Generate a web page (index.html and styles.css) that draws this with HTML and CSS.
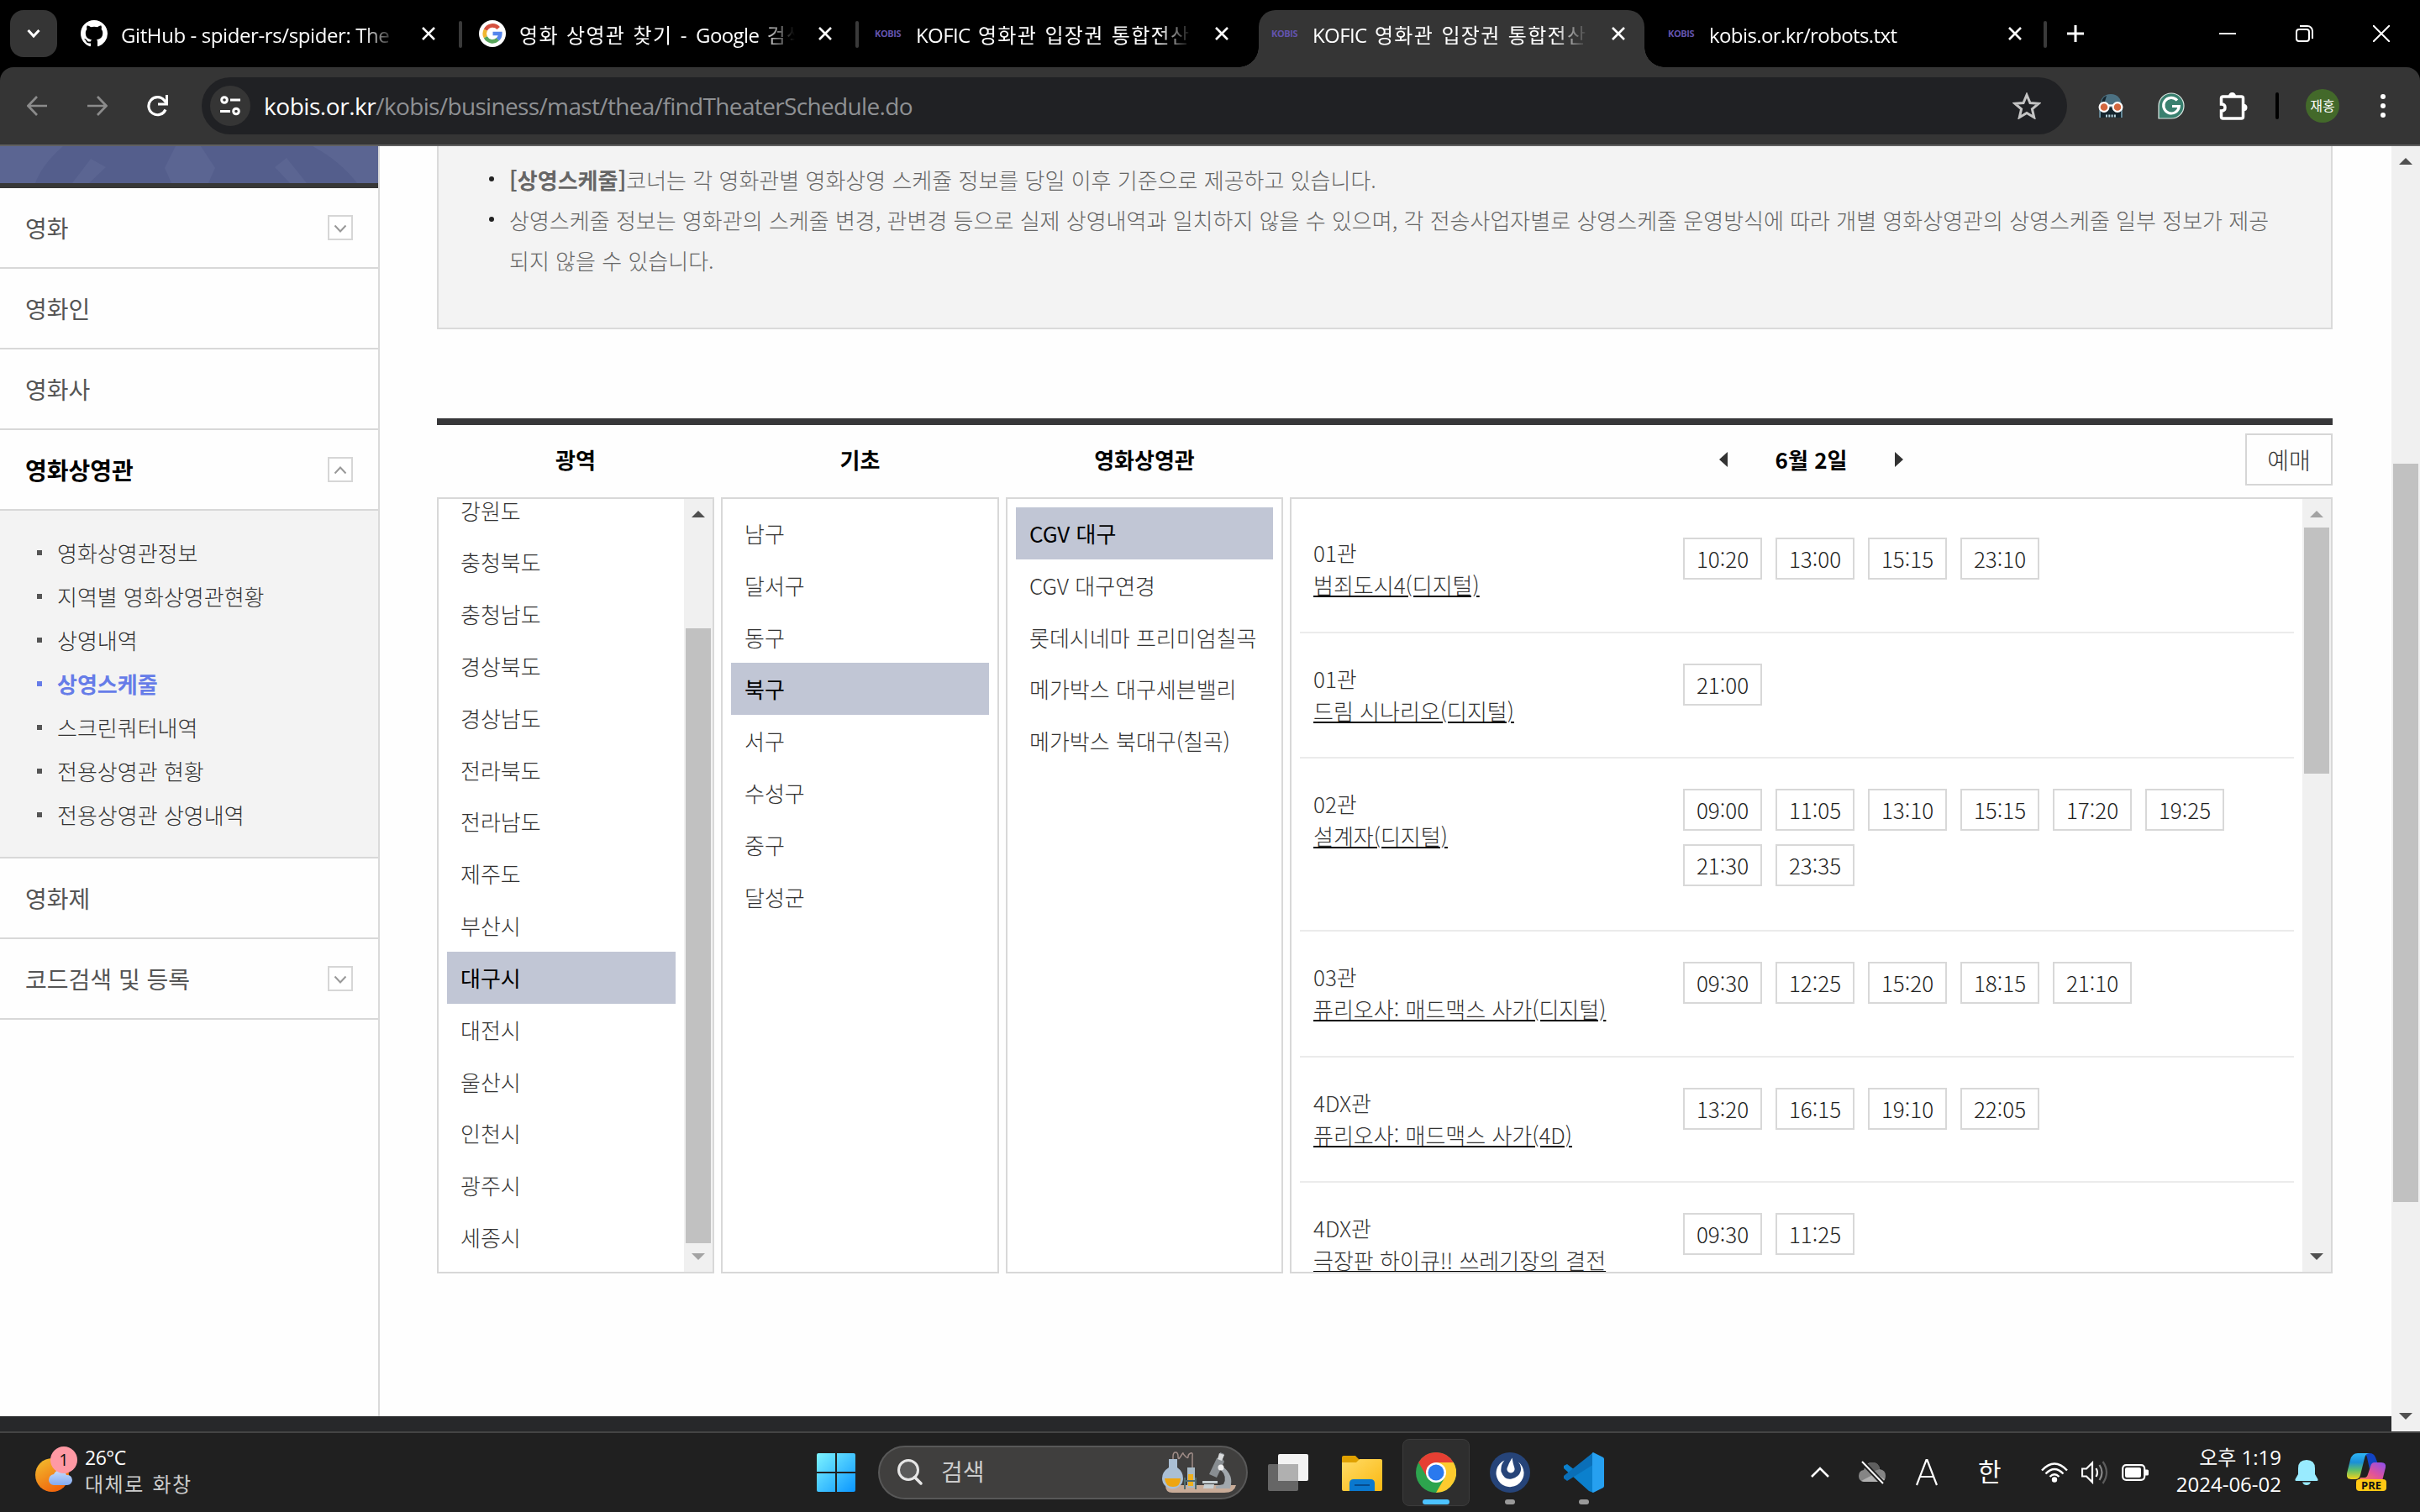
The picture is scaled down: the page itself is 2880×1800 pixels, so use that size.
FILE: index.html
```html
<!DOCTYPE html>
<html lang="ko">
<head>
<meta charset="utf-8">
<title>KOFIC 영화관 입장권 통합전산망</title>
<link rel="stylesheet" href="styles.css">
</head>
<body>
<svg class="defs" width="0" height="0">
  <defs>
    <symbol id="x" viewBox="0 0 16 16"><path d="M1 1l14 14M15 1L1 15" stroke="#fff" stroke-width="2.6" fill="none"/></symbol>
    <symbol id="down" viewBox="0 0 30 30"><rect x="1" y="1" width="28" height="28" fill="#fff" stroke="#d6d6d6" stroke-width="2"/><path d="M8.500 12.500l6.500 7 6.500-7" fill="none" stroke="#999" stroke-width="2"/></symbol>
    <symbol id="up" viewBox="0 0 30 30"><rect x="1" y="1" width="28" height="28" fill="#fff" stroke="#d6d6d6" stroke-width="2"/><path d="M8.500 19.500l6.500-7 6.500 7" fill="none" stroke="#999" stroke-width="2"/></symbol>
    <linearGradient id="win" x1="0" y1="0" x2="1" y2="1"><stop offset="0" stop-color="#7df4ff"/><stop offset="1" stop-color="#0a96ff"/></linearGradient>
    <linearGradient id="sun" x1="0" y1="0" x2=".6" y2="1"><stop offset="0" stop-color="#f2c230"/><stop offset="1" stop-color="#f0640c"/></linearGradient>
    <linearGradient id="cloud" x1="0" y1="0" x2="0" y2="1"><stop offset="0" stop-color="#c6dcfb"/><stop offset="1" stop-color="#84aaf0"/></linearGradient>
    <linearGradient id="folder" x1="0" y1="0" x2="1" y2="1"><stop offset="0" stop-color="#ffdc66"/><stop offset="1" stop-color="#fbb812"/></linearGradient>
    <linearGradient id="cpa" x1="0" y1="0" x2="0" y2="1"><stop offset="0" stop-color="#2fb6f6"/><stop offset=".35" stop-color="#1a8fd8"/><stop offset=".65" stop-color="#5fbf6a"/><stop offset="1" stop-color="#f5d31b"/></linearGradient>
    <linearGradient id="cpb" x1="1" y1="0" x2="0" y2="1"><stop offset="0" stop-color="#8a4ff0"/><stop offset=".5" stop-color="#e0529a"/><stop offset="1" stop-color="#ff8a3c"/></linearGradient>
  </defs>
</svg>

<header class="tabs">
  <div class="tab-search"><svg width="16" height="12" viewBox="0 0 16 12"><path d="M1.500 2l6.500 7 6.500-7" fill="none" stroke="#fff" stroke-width="3"/></svg></div>
  <div class="tab t1">
    <svg class="fav" viewBox="0 0 16 16"><path fill="#fff" d="M8 0C3.580 0 0 3.580 0 8c0 3.540 2.290 6.530 5.470 7.590.4.070.55-.17.55-.38 0-.19-.01-.82-.01-1.490-2.010.37-2.530-.49-2.690-.94-.09-.23-.48-.94-.82-1.130-.28-.15-.68-.52-.01-.53.63-.01 1.080.58 1.230.82.72 1.210 1.870.87 2.330.66.07-.52.28-.87.51-1.070-1.780-.2-3.640-.89-3.640-3.950 0-.87.31-1.590.82-2.150-.08-.2-.36-1.020.08-2.120 0 0 .67-.21 2.200.82a7.600 7.600 0 0 1 4 0c1.530-1.040 2.200-.82 2.200-.82.44 1.100.16 1.920.08 2.120.51.56.82 1.270.82 2.150 0 3.070-1.870 3.750-3.650 3.950.29.25.54.73.54 1.480 0 1.070-.01 1.930-.01 2.200 0 .21.15.46.55.38A8.010 8.010 0 0 0 16 8c0-4.420-3.580-8-8-8z"/></svg>
    <span class="title">GitHub - spider-rs/spider: The</span>
    <svg class="close"><use href="#x"/></svg>
  </div>
  <div class="tab t2">
    <svg class="fav" viewBox="0 0 32 32"><circle cx="16" cy="16" r="16" fill="#fff"/><g fill="none" stroke-width="4.600"><path d="M23.200 9.600A9.300 9.300 0 0 0 7.800 11.700" stroke="#d5503f"/><path d="M7.800 11.700a9.300 9.300 0 0 0 0 8.600" stroke="#f0b72f"/><path d="M7.800 20.300A9.300 9.300 0 0 0 22.400 22.800" stroke="#57a55a"/><path d="M22.400 22.800A9.300 9.300 0 0 0 25.300 16H16.500" stroke="#5585ec"/></g></svg>
    <span class="title ko">영화 상영관 찾기 - <i>Google</i> 검색</span>
    <svg class="close"><use href="#x"/></svg>
  </div>
  <div class="tab t3"><span class="kobis">KOBIS</span><span class="title ko"><i>KOFIC</i> 영화관 입장권 통합전산망</span><svg class="close"><use href="#x"/></svg></div>
  <div class="tab t4 active"><span class="kobis">KOBIS</span><span class="title ko"><i>KOFIC</i> 영화관 입장권 통합전산망</span><svg class="close"><use href="#x"/></svg></div>
  <div class="tab t5"><span class="kobis">KOBIS</span><span class="title narrow">kobis.or.kr/robots.txt</span><svg class="close"><use href="#x"/></svg></div>
  <svg class="plus" width="20" height="20"><path d="M10 0v20M0 10h20" stroke="#fff" stroke-width="3"/></svg>
  <div class="window-buttons">
    <svg width="20" height="20"><path d="M0 10h20" stroke="#fff" stroke-width="2"/></svg>
    <svg width="21" height="20" fill="none" stroke="#fff" stroke-width="2"><rect x="1" y="5" width="15" height="14" rx="3"/><path d="M5 1h9a6 6 0 0 1 6 6v9"/></svg>
    <svg width="20" height="20"><path d="M0 0l20 20M20 0L0 20" stroke="#fff" stroke-width="2"/></svg>
  </div>
</header>

<div class="toolbar">
  <svg class="nav" viewBox="0 0 24 24"><path d="M24 12H2M12 1L1.500 12 12 23" stroke="#8b8b8b" stroke-width="2.700" fill="none"/></svg>
  <svg class="nav second" viewBox="0 0 24 24"><path d="M0 12h22M12 1l10.500 11L12 23" stroke="#8b8b8b" stroke-width="2.700" fill="none"/></svg>
  <svg class="nav reload" viewBox="0 0 26 26"><path d="M23 17.500A10.500 10.500 0 1 1 21.500 6.500L23.500 9" stroke="#fff" stroke-width="3.200" fill="none"/><path d="M24.500 0v11H14" fill="none" stroke="#fff" stroke-width="3"/></svg>
  <div class="omnibox">
    <div class="site"><svg width="24" height="24" fill="none" stroke="#fff" stroke-width="3"><circle cx="5" cy="5" r="3.300"/><path d="M12 5h12M0 18.500h12"/><circle cx="19" cy="18.500" r="3.300"/></svg></div>
    <div class="url"><b>kobis.or.kr</b>/kobis/business/mast/thea/findTheaterSchedule.do</div>
    <svg width="34" height="32" viewBox="0 0 34 32"><path d="M17 3l4 9.500 10 .8-7.600 6.600 2.300 9.800L17 24.500l-8.700 5.200 2.300-9.800L3 13.300l10-.8z" fill="none" stroke="#c4c4c4" stroke-width="3"/></svg>
  </div>
  <svg class="ext1" width="32" height="32" viewBox="0 0 32 32"><path d="M3 18C3 7 8 2 16 2s13 5 13 16v12H3z" fill="#4c7182"/><path d="M5 14c0-6 3-9 6-10l-3 10zM4 18h24v12H4z" fill="#15252e"/><path d="M3 20v10M29 20v10" stroke="#6f97a8" stroke-width="1.500"/><circle cx="8" cy="17.500" r="5.400" fill="#d2673f" stroke="#fff" stroke-width="2.200"/><circle cx="24" cy="17.500" r="5.400" fill="#d2673f" stroke="#fff" stroke-width="2.200"/><path d="M13 15.500h6" stroke="#fff" stroke-width="2.200"/><path d="M10 28h12" stroke="#b9d4dd" stroke-width="3" stroke-dasharray="2 1.300"/></svg>
  <svg class="ext2" width="32" height="32" viewBox="0 0 32 32"><path d="M1 31V16A15 15 0 1 1 16 31z" fill="#39806f" stroke="#dce8e4" stroke-width="1.200"/><path d="M23 9.500a9.300 9.300 0 1 0 2.300 7H17" fill="none" stroke="#fff" stroke-width="3.200"/></svg>
  <svg class="ext3" width="34" height="34" viewBox="0 0 34 34"><path d="M2.500 15V8q0-2 2-2h22q2 0 2 2v22q0 2-2 2h-22q-2 0-2-2v-7q4.500 0 4.500-4t-4.500-4z" fill="none" stroke="#fff" stroke-width="3.500"/><path d="M11 5.500q.5-4.500 4.500-4.500T20 5.500zM29 14.500q4.500.5 4.500 4.500T29 23.500z" fill="#fff"/></svg>
  <i class="bar"></i>
  <span class="avatar">재홍</span>
  <svg class="dots" width="6" height="28"><g fill="#fff"><circle cx="3" cy="3" r="3"/><circle cx="3" cy="14" r="3"/><circle cx="3" cy="25" r="3"/></g></svg>
</div>

<div class="viewport">
  <div class="page">
    <div class="body">
      <nav class="side">
        <svg class="banner" width="450" height="44"><rect width="450" height="44" fill="#545e8c"/><g fill="#5b6592"><path d="M0 0h75Q50 22 42 44H0zM108 15l18 10-20 19H86zM209 0h30l17 26-8 18h-44l-8-18zM341 14l24 30h-20l-18-19zM372 0h78v44h-25Q405 18 372 0z"/></g></svg>
        <a class="menu">영화<svg><use href="#down"/></svg></a>
        <a class="menu">영화인</a>
        <a class="menu">영화사</a>
        <a class="menu on">영화상영관<svg><use href="#up"/></svg></a>
        <ul class="sub">
          <li>영화상영관정보</li><li>지역별 영화상영관현황</li><li>상영내역</li><li class="on">상영스케줄</li><li>스크린쿼터내역</li><li>전용상영관 현황</li><li>전용상영관 상영내역</li>
        </ul>
        <a class="menu">영화제</a>
        <a class="menu">코드검색 및 등록<svg><use href="#down"/></svg></a>
      </nav>
      <main>
        <ul class="notice">
          <li><b>[상영스케줄]</b>코너는 각 영화관별 영화상영 스케쥴 정보를 당일 이후 기준으로 제공하고 있습니다.</li>
          <li>상영스케줄 정보는 영화관의 스케줄 변경, 관변경 등으로 실제 상영내역과 일치하지 않을 수 있으며, 각 전송사업자별로 상영스케줄 운영방식에 따라 개별 영화상영관의 상영스케줄 일부 정보가 제공<br>되지 않을 수 있습니다.</li>
        </ul>
        <section class="schedule">
          <h3>광역</h3><h3>기초</h3><h3>영화상영관</h3>
          <div class="date"><svg width="10" height="18"><path d="M10 0v18L0 9z" fill="#333"/></svg><h3>6월 2일</h3><svg width="10" height="18"><path d="M0 0v18l10-9z" fill="#333"/></svg><span class="book">예매</span></div>
          <div class="box">
            <ul class="list scrolled"><li>강원도</li><li>충청북도</li><li>충청남도</li><li>경상북도</li><li>경상남도</li><li>전라북도</li><li>전라남도</li><li>제주도</li><li>부산시</li><li class="on">대구시</li><li>대전시</li><li>울산시</li><li>인천시</li><li>광주시</li><li>세종시</li></ul>
            <div class="scroll region"><i class="au"></i><span></span><i class="ad off"></i></div>
          </div>
          <div class="box"><ul class="list"><li>남구</li><li>달서구</li><li>동구</li><li class="on">북구</li><li>서구</li><li>수성구</li><li>중구</li><li>달성군</li></ul></div>
          <div class="box"><ul class="list"><li class="on">CGV 대구</li><li>CGV 대구연경</li><li>롯데시네마 프리미엄칠곡</li><li>메가박스 대구세븐밸리</li><li>메가박스 북대구(칠곡)</li></ul></div>
          <div class="box">
            <div class="shows">
              <div class="show"><p>01관<br><a>범죄도시4(디지털)</a></p><div class="times"><span>10:20</span><span>13:00</span><span>15:15</span><span>23:10</span></div></div>
              <div class="show"><p>01관<br><a>드림 시나리오(디지털)</a></p><div class="times"><span>21:00</span></div></div>
              <div class="show"><p>02관<br><a>설계자(디지털)</a></p><div class="times"><span>09:00</span><span>11:05</span><span>13:10</span><span>15:15</span><span>17:20</span><span>19:25</span><span>21:30</span><span>23:35</span></div></div>
              <div class="show"><p>03관<br><a>퓨리오사: 매드맥스 사가(디지털)</a></p><div class="times"><span>09:30</span><span>12:25</span><span>15:20</span><span>18:15</span><span>21:10</span></div></div>
              <div class="show"><p>4DX관<br><a>퓨리오사: 매드맥스 사가(4D)</a></p><div class="times"><span>13:20</span><span>16:15</span><span>19:10</span><span>22:05</span></div></div>
              <div class="show"><p>4DX관<br><a>극장판 하이큐!! 쓰레기장의 결전</a></p><div class="times"><span>09:30</span><span>11:25</span></div></div>
            </div>
            <div class="scroll films"><i class="au off"></i><span></span><i class="ad"></i></div>
          </div>
        </section>
      </main>
    </div>
    <footer></footer>
  </div>
  <div class="scroll main"><i class="au"></i><span></span><i class="ad"></i></div>
</div>

<div class="taskbar">
  <div class="weather">
    <svg width="54" height="56" viewBox="0 0 54 56"><circle cx="20" cy="34" r="20" fill="url(#sun)"/><path d="M22 46a6 6 0 0 1-6-6 7 7 0 0 1 6-7 8 8 0 0 1 15 1 6 6 0 0 1 7 6 6 6 0 0 1-6 6z" fill="url(#cloud)"/><circle cx="34" cy="16" r="16" fill="#ff99a4"/><text x="34" y="23" text-anchor="middle" font-family="Open Sans" font-size="20" fill="#111">1</text></svg>
    <div class="wtext"><span>26°C</span><span class="dim">대체로 화창</span></div>
  </div>
  <svg class="start" width="46" height="46" viewBox="0 0 46 46"><path d="M2 0h20v22H0V2q0-2 2-2zM24 0h20q2 0 2 2v20H24zM0 24h22v22H2q-2 0-2-2zM24 24h22v20q0 2-2 2H24z" fill="url(#win)"/></svg>
  <div class="search">
    <svg width="32" height="32" viewBox="0 0 32 32" fill="none" stroke="#e6e6e6"><circle cx="14" cy="13" r="11.500" stroke-width="3" fill="#5a5a5a"/><path d="M21.500 21.500L29 29" stroke-width="3.500" stroke-linecap="round"/></svg>
    <span>검색</span>
    <svg class="lab" width="92" height="50" viewBox="0 0 92 50"><path d="M4 40h84q-2 9-14 9H12q-8 0-8-9z" fill="#c9ac98"/><path d="M13 12V6q0-5 3-5t3 5 3 0 3-4 3 4 3 0 3-4 2 4v14" fill="none" stroke="#a08d88" stroke-width="1.500"/><path d="M8 9h10v10q7 5 7 13a12 12 0 0 1-25 0q0-8 8-13z" fill="#aabfd4"/><path d="M3 32h19q0 10-9 10T3 32z" fill="#eea50f"/><path d="M30 19h9v24h-9z" fill="#a8bac6"/><path d="M31 27h6v14h-6z" fill="#efb01c"/><path d="M27 31v14M40 31v14M27 35h13" stroke="#526d6f" stroke-width="2"/><path d="M69 1l5 2-2 6 2 3-9 19-9-4 9-19 4-1z" fill="#888d91"/><path d="M68 2l6 2-3 7-5-2z" fill="#d8dadb"/><path d="M72 18q14 10 9 26H64v-3l9-2q5-9-3-17z" fill="#a1a8ad"/><path d="M48 35h18v3H48zM50 39h12l-1 5H49z" fill="#c8d0d3"/><circle cx="70" cy="19" r="3.500" fill="#eee"/></svg>
  </div>
  <div class="apps">
    <div class="app"><svg viewBox="0 0 48 48"><rect x="12" y="2" width="36" height="32" rx="2" fill="#f3f3f3"/><rect x="0" y="14" width="36" height="32" rx="2" fill="#666"/><path d="M12 14h24v20H12z" fill="#b0b0b0"/></svg></div>
    <div class="app"><svg viewBox="0 0 48 48"><path d="M2 4h14l5 5h25q2 0 2 2v30H0V6q0-2 2-2z" fill="#e0a100"/><path d="M0 12h17l4-4h25q2 0 2 2v34q0 2-2 2H2q-2 0-2-2z" fill="url(#folder)"/><path d="M9 46V37q0-5 5-5h20q5 0 5 5v9z" fill="#0a78ce"/><path d="M15 39h18" stroke="#064b8c" stroke-width="2"/></svg></div>
    <div class="app current"><svg viewBox="0 0 48 48"><circle cx="24" cy="24" r="24" fill="#2da44e"/><path d="M24 24L3.200 12A24 24 0 0 1 44.800 12H24z" fill="#e63f33"/><path d="M24 12h20.800A24 24 0 0 1 24 48l10.400-18z" fill="#fdcb2e"/><path d="M3.200 12L13.600 30 24 24 24 12z" fill="#e63f33"/><circle cx="24" cy="24" r="12" fill="#fff"/><circle cx="24" cy="24" r="9.500" fill="#2a79ee"/></svg></div>
    <div class="app open"><svg viewBox="0 0 48 48"><circle cx="24" cy="24" r="24" fill="#264479"/><path d="M17.500 9.500A16.500 16.500 0 1 0 34 11.500q4.500 5 2.500 11.500T26 31.500 13.500 23Q12.500 15 17.500 9.500z" fill="#fff"/><path d="M26.500 6.500q1 7 3 12.500a4.600 4.600 0 1 1-9 0q2-6 6-12.500z" fill="#fff"/></svg></div>
    <div class="app open"><svg viewBox="0 0 48 48"><path d="M35 0L13 21 4 14 0 16v3l30 27 5 2 1-14z" fill="#0b80cd"/><path d="M36 14L4 34l-4-3v-3L34 1z" fill="#0a6fb8"/><path d="M35 0l12 6q1 1 1 2v32q0 1-1 2l-12 6q-1 0-1-2V2q0-2 1-2z" fill="#26a0f0"/></svg></div>
  </div>
  <div class="tray">
    <svg class="chev" width="22" height="14"><path d="M1 12L11 2l10 10" fill="none" stroke="#fff" stroke-width="2.500"/></svg>
    <svg class="onedrive" width="32" height="28" viewBox="0 0 32 28"><path d="M6 25q-6-1-6-7t6-7q2-9 10-9t9 8q7 1 7 8t-6 7z" fill="#858585"/><path d="M9 7Q12 2 17 2q7 0 8 8l-9 3z" fill="#5f5f5f"/><path d="M3 24l17-9 11 7q-1 3-5 3H6z" fill="#b0b0b0"/><path d="M4 1l25 26" stroke="#202020" stroke-width="6"/><path d="M4 1l25 26" stroke="#fff" stroke-width="2"/></svg>
    <svg class="ime-a" width="26" height="32"><path d="M1 31L12.500 1h1L25 31M5 21h16" fill="none" stroke="#fff" stroke-width="2.200"/></svg>
    <span class="ime">한</span>
    <svg class="wifi" width="32" height="24" viewBox="0 0 32 24" fill="none" stroke="#fff" stroke-width="2.400"><path d="M1 9.500q15-16 30 0M5.500 13.500q10.500-11 21 0M10.500 17q5.500-5.500 11 0"/><circle cx="16" cy="20.500" r="2" fill="#fff"/></svg>
    <svg class="vol" width="32" height="28" viewBox="0 0 32 28" fill="none" stroke="#fff" stroke-width="2.200"><path d="M1 9.500v9h5l7 7V2.500l-7 7zM17.500 9q3 5 0 10"/><path d="M21.500 5q6 9 0 18" stroke="#888"/><path d="M25.500 1q9 13 0 26" stroke="#5c5c5c"/></svg>
    <svg class="batt" width="32" height="20"><rect x="1.200" y="1.200" width="26" height="17.600" rx="4" fill="none" stroke="#fff" stroke-width="2.200"/><rect x="4" y="4" width="19" height="12" rx="2" fill="#fff"/><path d="M28 6.500h2.500q1.500 0 1.500 1.500v4q0 1.500-1.500 1.500H28z" fill="#fff"/></svg>
    <div class="clock"><span>오후 1:19</span><span>2024-06-02</span></div>
    <svg class="bell" width="28" height="30" viewBox="0 0 28 30"><path d="M14 0q10 0 10 10v7l3.500 6q.5 2-1 2h-25q-1.500 0-1-2L4 17v-7Q4 0 14 0zM9 26.500h10q-1.500 3.500-5 3.500t-5-3.500z" fill="#99ebff"/></svg>
    <svg class="copilot" width="48" height="46" viewBox="0 0 48 46"><path d="M20 0h7q5 0 7 5l3 8q-8-1-10 6l-3-14q-1-4-4-5z" fill="#1244c4"/><path d="M13 0h14q-5 0-6 6l-5 20q-1 5-6 5H5q-6 0-5-7L4 8q2-8 9-8z" fill="url(#cpa)"/><path d="M33 11h8q6 0 5 6l-4 16H10q5-1 6-4h5q3 0 4-4l3-9q1-5 5-5z" fill="url(#cpb)"/><rect x="11" y="31" width="36" height="14" rx="4" fill="#ffc814"/><text x="29" y="42.500" text-anchor="middle" font-family="Open Sans" font-weight="700" font-size="13" fill="#111">PRE</text></svg>
  </div>
</div>
</body>
</html>
```
FILE: styles.css
```css
* { box-sizing: border-box; }
body { margin: 0; width: 2880px; height: 1800px; overflow: hidden; background: #000; display: flex; flex-direction: column; font-family: "Noto Sans CJK KR", sans-serif; }
ul, h3, p { margin: 0; padding: 0; list-style: none; }
svg { display: block; flex: none; }
.defs { position: absolute; }

/* tab strip */
.tabs { height: 80px; flex: none; display: flex; align-items: center; padding-left: 12px; color: #fff; }
.tab-search { width: 56px; height: 56px; border-radius: 16px; background: #353535; display: grid; place-items: center; flex: none; }
.tab { display: flex; align-items: center; height: 68px; align-self: flex-end; padding-bottom: 12px; flex: none; position: relative; }
.fav { width: 32px; height: 32px; }
.title { font: 24px/36px "Open Sans", "Noto Sans CJK KR", sans-serif; height: 40px; margin-left: 16px; width: 328px; overflow: hidden; white-space: nowrap; padding-top: 4px; -webkit-mask-image: linear-gradient(90deg, #000 88%, transparent); mask-image: linear-gradient(90deg, #000 88%, transparent); letter-spacing: -.4px; }
.title.ko { letter-spacing: 1.300px; word-spacing: 1.800px; }
.title i { font-style: normal; letter-spacing: -.6px; }
.title.narrow { letter-spacing: -.6px; }
.close { width: 16px; height: 16px; margin-left: auto; }
.t1 { width: 482px; padding-left: 28px; padding-right: 32px; }
.t2 { width: 472px; padding-left: 20px; padding-right: 32px; }
.t3 { width: 476px; padding-left: 19px; padding-right: 36px; }
.t4 { width: 459px; padding-left: 15px; padding-right: 23px; }
.t5 { width: 479px; padding-left: 28px; padding-right: 30px; }
.t1::after, .t2::after, .t5::after { content: ""; position: absolute; right: 0; top: 13px; width: 4px; height: 32px; border-radius: 2px; background: #3a3a3a; }
.active { background: #353535; border-radius: 20px 20px 0 0; }
.active::before, .active::after { content: ""; position: absolute; bottom: 0; width: 24px; height: 24px; }
.active::before { left: -24px; background: radial-gradient(circle at 0 0, transparent 23.500px, #353535 24px); }
.active::after { right: -24px; background: radial-gradient(circle at 100% 0, transparent 23.500px, #353535 24px); }
.kobis { font: 700 11px/32px "Open Sans", sans-serif; color: #6353ad; width: 33px; letter-spacing: -.4px; }
.plus { margin-left: 24px; }
.window-buttons { display: flex; gap: 71px; margin-left: auto; padding-right: 36px; }

/* toolbar */
.toolbar { height: 94px; flex: none; display: flex; align-items: center; background: #353535; border-radius: 16px 16px 0 0; border-bottom: 2px solid #5f5f5f; padding-left: 32px; }
.nav { width: 24px; height: 24px; margin-right: 48px; }
.second { margin-right: 46px; }
.reload { width: 26px; height: 26px; margin-right: 40px; }
.omnibox { width: 2220px; height: 68px; border-radius: 34px; background: #202124; display: flex; align-items: center; padding: 0 31px 0 10px; flex: none; }
.site { width: 48px; height: 48px; border-radius: 50%; background: #353535; display: grid; place-items: center; }
.url { flex: 1; margin-left: 16px; font: 28px/40px "Open Sans", sans-serif; color: #8f9194; letter-spacing: -.65px; }
.url b { font-weight: 400; color: #fff; letter-spacing: -.45px; }
.ext1 { margin-left: 36px; }
.ext2 { margin-left: 40px; }
.ext3 { margin-left: 41px; }
.bar { width: 4px; height: 32px; background: #000; border-radius: 2px; margin-left: 33px; }
.avatar { width: 40px; height: 40px; border-radius: 50%; background: #43692a; color: #fff; font-size: 16px; line-height: 38px; text-align: center; margin-left: 32px; white-space: nowrap; }
.dots { margin-left: 49px; }

/* web page */
.viewport { height: 1530px; flex: none; display: flex; background: #fefefe; }
.page { flex: 1; display: flex; flex-direction: column; }
.body { flex: 1; display: flex; }
footer { height: 18px; background: #27282a; }
.side { width: 452px; border-right: 2px solid #dadada; }
.banner + .menu { border-top: 6px solid #373737; height: 102px; }
.menu { display: flex; align-items: center; justify-content: space-between; height: 96px; border-bottom: 2px solid #d8d8d8; padding: 0 30px; font-size: 28px; color: #555; }
.menu svg { width: 30px; height: 30px; }
.menu.on { font-weight: 700; color: #000; }
.sub { height: 414px; background: #f3f3f3; border-bottom: 2px solid #d8d8d8; padding-top: 24px; }
.sub li, .notice, .book, .list, .show { font-family: "Noto Sans CJK KR Light", "Noto Sans CJK KR", sans-serif; font-weight: 300; }
.sub li { height: 52px; line-height: 52px; font-size: 26px; color: #333; display: flex; align-items: center; }
.sub li::before { content: ""; width: 6px; height: 6px; background: #555; margin: 0 18px 0 44px; }
.sub li.on { color: #667ce8; font-weight: 700; font-family: "Noto Sans CJK KR", sans-serif; }
.sub li.on::before { background: #667ce8; }
main { margin-left: 68px; width: 2256px; }
.notice { height: 218px; background: #f3f3f3; border: 2px solid #dadada; border-top: 0; padding: 16px 0 0 84px; font-size: 26px; line-height: 48px; color: #666; white-space: nowrap; }
.notice li { position: relative; }
.notice li::before { content: ""; position: absolute; left: -24px; top: 20px; width: 6px; height: 6px; border-radius: 50%; background: #222; }
.notice b { font-weight: 700; font-family: "Noto Sans CJK KR", sans-serif; }
.schedule { margin-top: 106px; border-top: 8px solid #373739; display: grid; grid-template-columns: 330px 331px 330px 1241px; column-gap: 8px; grid-template-rows: 86px 924px; }
h3 { font-size: 26px; font-weight: 700; color: #000; text-align: center; line-height: 82px; }
.date { display: flex; justify-content: center; align-items: center; gap: 57px; position: relative; height: 82px; white-space: nowrap; }
.book { position: absolute; right: 0; top: 10px; width: 104px; height: 62px; border: 2px solid #d6d6d6; font-size: 28px; line-height: 58px; text-align: center; color: #333; }
.box { border: 2px solid #d8d8d8; background: #fff; display: flex; overflow: hidden; }
.list { flex: 1; padding: 10px 10px 0; font-size: 26px; color: #333; white-space: nowrap; }
.list.scrolled { margin-top: -27.500px; }
.list li { height: 61.830px; line-height: 62px; padding-left: 16px; }
.list .on { background: #c1c6d5; color: #000; font-family: "Noto Sans CJK KR", sans-serif; font-weight: 400; }
.shows { flex: 1; padding: 10px 10px 0 10px; }
.show { display: flex; height: 149.500px; border-bottom: 2px solid #ebebeb; padding: 36px 0 0 16px; }
.show p { width: 440px; font-size: 26px; line-height: 38px; color: #333; white-space: nowrap; margin-top: -1px; }
.show a { text-decoration: underline; text-decoration-color: #000; text-decoration-thickness: 2px; text-underline-offset: 2px; }
.times { display: flex; flex-wrap: wrap; gap: 16px; flex: 1; align-content: flex-start; }
.show:nth-child(3) { height: 206px; }
.times span { width: 94px; height: 50px; border: 2px solid #d8d8d8; font-size: 26px; line-height: 46px; text-align: center; color: #222; }

/* scrollbars */
.scroll { width: 34px; background: #f0f0f0; flex: none; display: flex; flex-direction: column; align-items: center; }
.scroll span { width: 30px; background: #c1c1c1; }
.au, .ad { border: 8px solid transparent; width: 0; height: 0; flex: none; }
.au { border-top: 0; border-bottom-color: #505050; }
.ad { border-bottom: 0; border-top-color: #505050; margin-top: auto; }
.au.off { border-bottom-color: #a3a3a3; }
.ad.off { border-top-color: #a3a3a3; }
.region, .films { padding: 14px 0; }
.region span { margin-top: 132px; height: 732px; }
.films span { margin-top: 12px; height: 293px; }
.main { padding: 14px 0; }
.main span { margin-top: 356px; height: 879px; }

/* taskbar */
.taskbar { height: 96px; flex: none; background: #202020; border-top: 2px solid #444; display: flex; align-items: center; color: #fff; font-family: "Open Sans", "Noto Sans CJK KR", sans-serif; }
.weather { display: flex; width: 972px; padding-left: 42px; padding-bottom: 2px; }
.wtext { display: flex; flex-direction: column; font-size: 23px; line-height: 31px; margin: -2px 0 0 5px; letter-spacing: -.5px; }
.dim { color: #ccc; font-size: 24px; letter-spacing: 1.500px; word-spacing: 2px; }
.search { width: 440px; height: 64px; margin-left: 27px; border-radius: 32px; background: #403f3e; border: 2px solid #585858; display: flex; align-items: center; padding: 0 8px 0 20px; font-size: 28px; color: #ccc; flex: none; }
.search span { margin: -4px 0 0 21px; }
.lab { margin-left: auto; }
.apps { display: flex; gap: 8px; margin-left: 8px; }
.app { width: 80px; height: 80px; border-radius: 8px; display: grid; justify-items: center; padding-top: 16px; position: relative; }
.app svg { width: 48px; height: 48px; }
.current { background: #2e2e2e; border: 1px solid #3c3c3c; padding-top: 15px; }
.current::after, .open::after { content: ""; position: absolute; bottom: 2px; left: 34px; width: 12px; height: 6px; border-radius: 3px; background: #999; }
.current::after { left: 23px; width: 32px; background: #4cc2ff; bottom: 1px; }
.tray { display: flex; align-items: center; margin-left: auto; padding-right: 39px; }
.chev { margin-right: -1px; }
.onedrive { margin-left: 36px; }
.ime-a { margin-left: 36px; }
.ime { font-size: 30px; line-height: 40px; margin: -3px 0 0 48px; width: 32px; }
.wifi { margin-left: 43px; }
.vol { margin-left: 16px; }
.batt { margin-left: 16px; }
.clock { width: 158px; display: flex; flex-direction: column; text-align: right; font-size: 24px; line-height: 32px; letter-spacing: 0; white-space: nowrap; margin-top: -4px; }
.bell { margin-left: 16px; }
.copilot { margin-left: 34px; }
```
